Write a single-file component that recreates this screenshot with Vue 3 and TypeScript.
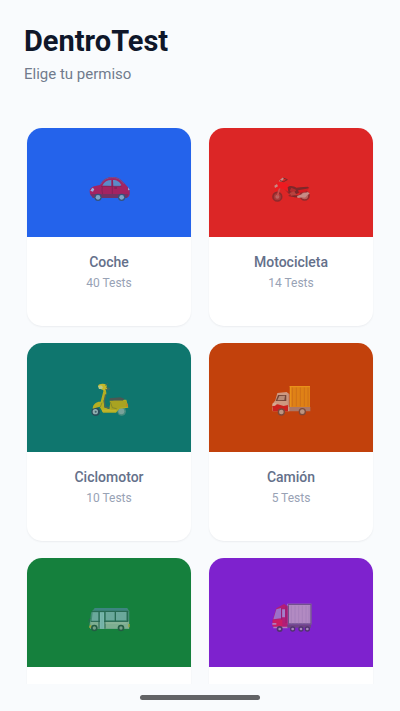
<script setup lang="ts">
type Vehicle = 'car' | 'motorbike' | 'scooter' | 'truck' | 'bus' | 'trailer'

interface Licence {
  vehicle: Vehicle
  label: string
  name?: string
  tests?: number
}

const licences: Licence[] = [
  { vehicle: 'car', label: 'Coche', name: 'Coche', tests: 40 },
  { vehicle: 'motorbike', label: 'Motocicleta', name: 'Motocicleta', tests: 14 },
  { vehicle: 'scooter', label: 'Ciclomotor', name: 'Ciclomotor', tests: 10 },
  { vehicle: 'truck', label: 'Camión', name: 'Camión', tests: 5 },
  { vehicle: 'bus', label: 'Autobús' },
  { vehicle: 'trailer', label: 'Remolque' },
]
</script>

<template>
  <div class="page">
    <header class="header">
      <h1 class="title">DentroTest</h1>
      <p class="subtitle">Elige tu permiso</p>
    </header>

    <main class="list">
      <button
        v-for="item in licences"
        :key="item.vehicle"
        type="button"
        class="card"
        :aria-label="item.label"
      >
        <span class="cover" :class="item.vehicle">
          <svg v-if="item.vehicle === 'car'" class="icon" viewBox="-3 0 180 150" aria-hidden="true">
            <path d="M29 79C28 72 33 68 42 64L60 60C67 47 76 38 93 36C112 34 123 42 133 55L144 67C149 71 150 80 149 89L145 96H40C32 94 29 88 29 79Z" fill="#a42362" />
            <path d="M62 58C70 45 80 39 95 38C113 37 123 45 131 56" fill="none" stroke="#6a5a97" stroke-width="3" />
            <path d="M67 62C73 50 82 45 94 45V63ZM99 45C112 45 119 51 124 60L120 64H100Z" fill="#5b8cc8" />
            <path d="M63 64H124M97 45V93M67 65C65 76 66 85 71 93" fill="none" stroke="#792253" stroke-width="2" />
            <path d="M31 77L37 68L43 72L39 80ZM145 67L149 75L144 76Z" fill="#9aafe0" />
            <path d="M32 87H145L142 99H38Z" fill="#713366" />
            <circle cx="54" cy="97" r="11" fill="#35537c" /><circle cx="54" cy="97" r="7" fill="#80a5c7" />
            <circle cx="125" cy="97" r="11" fill="#35537c" /><circle cx="125" cy="97" r="7" fill="#80a5c7" />
            <path d="M103 69H111" stroke="#6b224f" stroke-width="3" />
          </svg>

          <svg v-else-if="item.vehicle === 'motorbike'" class="icon" viewBox="-3 0 180 150" aria-hidden="true">
            <circle cx="46" cy="95" r="13" fill="#a83a3a" stroke="#8e2a2c" stroke-width="5" /><circle cx="46" cy="95" r="6" fill="#bd6260" />
            <circle cx="128" cy="92" r="13" fill="#b9605c" stroke="#8e2c2e" stroke-width="5" /><circle cx="127" cy="91" r="7" fill="#c48b83" />
            <path d="M70 70L82 84L98 94L122 92" fill="none" stroke="#8a292b" stroke-width="6" />
            <path d="M46 94L54 66" stroke="#c9504e" stroke-width="5" />
            <path d="M38 66L50 50L64 50L80 60L88 69L80 82L66 72L52 70L40 80Z" fill="#ee1a20" />
            <path d="M77 67C83 60 97 64 103 68L115 67L137 65L142 69L120 80L103 87L91 91L79 80Z" fill="#7e282a" />
            <path d="M108 76L142 70L132 80L111 84Z" fill="#d41b22" />
            <path d="M88 68L103 75L95 84L83 78Z" fill="#b42c2e" />
            <path d="M50 49L61 38L67 39L59 50ZM37 62L45 57L48 64L39 69ZM105 93L138 81L143 86L125 97L107 99Z" fill="#c78b86" />
            <path d="M64 39L76 44L65 50L54 47M80 92L105 96" fill="none" stroke="#7b292a" stroke-width="3" />
            <path d="M82 84L96 79L104 89L88 92Z" fill="#b8433f" />
          </svg>

          <svg v-else-if="item.vehicle === 'scooter'" class="icon" viewBox="-3 15 180 150" aria-hidden="true">
            <circle cx="47" cy="110" r="13" fill="#294c59" /><circle cx="46" cy="110" r="8" fill="#92afb0" />
            <circle cx="125" cy="109" r="13" fill="#478b7e" /><circle cx="124" cy="109" r="9" fill="#78a29a" />
            <path d="M69 38C76 41 80 49 79 57L71 77L73 97L88 103L91 81L104 74H139L145 98L118 101L108 113H69L59 95L38 101C39 85 51 79 62 80L70 49Z" fill="#b4ae22" />
            <path d="M77 58L73 77L75 96L88 99" fill="none" stroke="#4d6758" stroke-width="4" />
            <path d="M54 33C55 26 71 24 79 29L82 43L75 47L63 43Z" fill="#c5b828" />
            <path d="M54 34L63 31L69 36L66 42L57 42Z" fill="#bac982" />
            <path d="M79 37L89 41L85 45L76 43M76 31L83 25" fill="none" stroke="#4d645b" stroke-width="3" />
            <path d="M88 73Q88 68 95 69L121 67L133 71L129 77H91Z" fill="#4b5853" />
            <path d="M89 77H138L144 95L118 98L106 109L92 104Z" fill="#a9a321" />
            <path d="M91 81L97 98L110 101M66 83L61 96" fill="none" stroke="#707b32" stroke-width="2" />
            <path d="M66 107H109" stroke="#c1b52b" stroke-width="5" />
            <path d="M141 83L145 94L138 94Z" fill="#ca792c" />
            <circle cx="47" cy="110" r="3" fill="#3e6069" />
          </svg>

          <svg v-else-if="item.vehicle === 'truck'" class="icon" viewBox="-3 15 180 150" aria-hidden="true">
            <path d="M83 33H144V97H83Z" fill="#df8116" />
            <path d="M91 37V94M103 37V94M115 37V94M127 37V94M138 37V94" stroke="#cf7019" stroke-width="3" />
            <path d="M83 35H144M86 35V97" fill="none" stroke="#eb951c" stroke-width="3" />
            <path d="M76 96H145V109H76Z" fill="#ac7765" />
            <path d="M46 54L74 51L82 58V109H32Q29 99 32 86L40 76Z" fill="#ce9880" />
            <path d="M48 60H73V78H41Z" fill="#744437" /><path d="M52 63L69 62L67 75L46 76Z" fill="#b88a76" />
            <path d="M31 93L47 88L65 93L78 90V109H33Z" fill="#cb211d" />
            <path d="M32 85L44 84L40 92L31 93Z" fill="#d9a890" />
            <path d="M79 56V96" fill="none" stroke="#b87b66" stroke-width="2" />
            <circle cx="58" cy="111" r="11" fill="#7c4a3b" /><circle cx="58" cy="111" r="7" fill="#bc9581" />
            <circle cx="121" cy="110" r="11" fill="#7c4a3b" /><circle cx="121" cy="110" r="7" fill="#bc9581" />
          </svg>

          <svg v-else-if="item.vehicle === 'bus'" class="icon" viewBox="-3 0 180 150" aria-hidden="true">
            <path d="M38 46L47 39H141L148 48V102H31Q25 93 30 80L33 54Z" fill="#438c73" />
            <path d="M43 43H142" stroke="#3d8580" stroke-width="8" />
            <path d="M31 79H147V101H31Z" fill="#7dae91" />
            <path d="M38 52H56V79H35ZM76 51H104V76H76ZM108 51H139V76H108Z" fill="#6aa89b" />
            <path d="M35 49H145M57 51V101M75 51V101M106 51V79M142 50V79M32 79H145" fill="none" stroke="#23634e" stroke-width="3" />
            <path d="M60 52H72V101H60Z" fill="#79b7ad" /><path d="M66 53V100" stroke="#69a99d" stroke-width="2" />
            <path d="M28 92L34 89V98H27ZM145 87H149V97H145Z" fill="#98a636" />
            <path d="M76 84H140" stroke="#91b99e" stroke-width="3" />
            <path d="M30 70L27 76V82" fill="none" stroke="#2c6856" stroke-width="3" />
            <circle cx="43" cy="99" r="10" fill="#235d43" /><circle cx="43" cy="99" r="5" fill="#75a087" />
            <circle cx="123" cy="99" r="10" fill="#235d43" /><circle cx="123" cy="99" r="5" fill="#75a087" />
          </svg>

          <svg v-else class="icon" viewBox="-3 0 180 150" aria-hidden="true">
            <path d="M76 26H148V88H76Z" fill="#b28ac2" />
            <path d="M78 28H147V87H79V31" fill="none" stroke="#72518e" stroke-width="4" />
            <path d="M88 32V85M99 32V85M110 32V85M121 32V85M132 32V85M141 32V85" stroke="#a27bb8" stroke-width="2" />
            <path d="M43 40L66 27L77 34V96H34L31 77Z" fill="#b31d76" />
            <path d="M43 43L57 39V70L34 73Z" fill="#9c70c9" /><path d="M60 43H69V67H60Z" fill="#a57fca" />
            <path d="M33 76L61 73V94H31Z" fill="#cb1d64" />
            <path d="M31 84H43V89H31ZM34 95H77V100H34Z" fill="#b27abb" />
            <path d="M76 89H147V98H76Z" fill="#704386" />
            <path d="M59 40V74M72 35V84" fill="none" stroke="#852174" stroke-width="2" />
            <g fill="#51356f"><circle cx="53" cy="102" r="9" /><circle cx="92" cy="102" r="8" /><circle cx="117" cy="102" r="8" /><circle cx="136" cy="102" r="8" /></g>
            <g fill="#a985bd"><circle cx="53" cy="102" r="4" /><circle cx="92" cy="102" r="4" /><circle cx="117" cy="102" r="4" /><circle cx="136" cy="102" r="4" /></g>
          </svg>
        </span>
        <span class="body">
          <span v-if="item.name" class="name">{{ item.name }}</span>
          <span v-if="item.tests" class="tests">{{ item.tests }} Tests</span>
        </span>
      </button>
    </main>

    <footer class="footer">
      <span class="handle"></span>
    </footer>
  </div>
</template>

<style>
body {
  background: #f9fbfd;
}
</style>

<style scoped>
.page {
  display: flex;
  flex-direction: column;
  height: 100vh;
  font-family: Roboto, 'Liberation Sans', sans-serif;
  background: #f9fbfd;
}

.header {
  padding: 23px 24px 0;
}

.title {
  margin: 0;
  font-size: 29px;
  line-height: 36px;
  font-weight: 700;
  color: #0f172a;
}

.subtitle {
  margin: 5px 0 0;
  font-size: 15px;
  line-height: 20px;
  color: #717b8d;
}

.list {
  display: grid;
  flex: 1;
  grid-template-columns: 1fr 1fr;
  grid-auto-rows: 198px;
  gap: 17px 18px;
  min-height: 0;
  margin-top: 24px;
  padding: 20px 27px;
  overflow-y: auto;
  scrollbar-width: none;
}

.card {
  display: flex;
  flex-direction: column;
  padding: 0;
  overflow: hidden;
  border: 0;
  border-radius: 15px;
  background: #ffffff;
  box-shadow: 0 1px 2px rgb(15 23 42 / 6%);
  font: inherit;
  cursor: pointer;
}

.cover {
  display: flex;
  flex: none;
  align-items: center;
  justify-content: center;
  box-sizing: border-box;
  width: 100%;
  height: 109px;
  padding-top: 15px;
}

.car {
  background: #2463eb;
}

.motorbike {
  background: #dc2626;
}

.scooter {
  background: #0f766e;
}

.truck {
  background: #c2410c;
}

.bus {
  background: #15803d;
}

.trailer {
  background: #7e22ce;
}

.icon {
  width: 60px;
  height: 50px;
}

.body {
  display: flex;
  flex-direction: column;
  align-items: center;
  width: 100%;
  padding-top: 15px;
}

.name {
  font-size: 14px;
  line-height: 20px;
  font-weight: 500;
  color: #64708a;
}

.tests {
  margin-top: 3px;
  font-size: 12px;
  line-height: 16px;
  color: #98a2b5;
}

.footer {
  display: flex;
  flex: none;
  justify-content: center;
  height: 16px;
  padding-top: 11px;
}

.handle {
  width: 30%;
  height: 5px;
  border-radius: 3px;
  background: #636466;
}
</style>
